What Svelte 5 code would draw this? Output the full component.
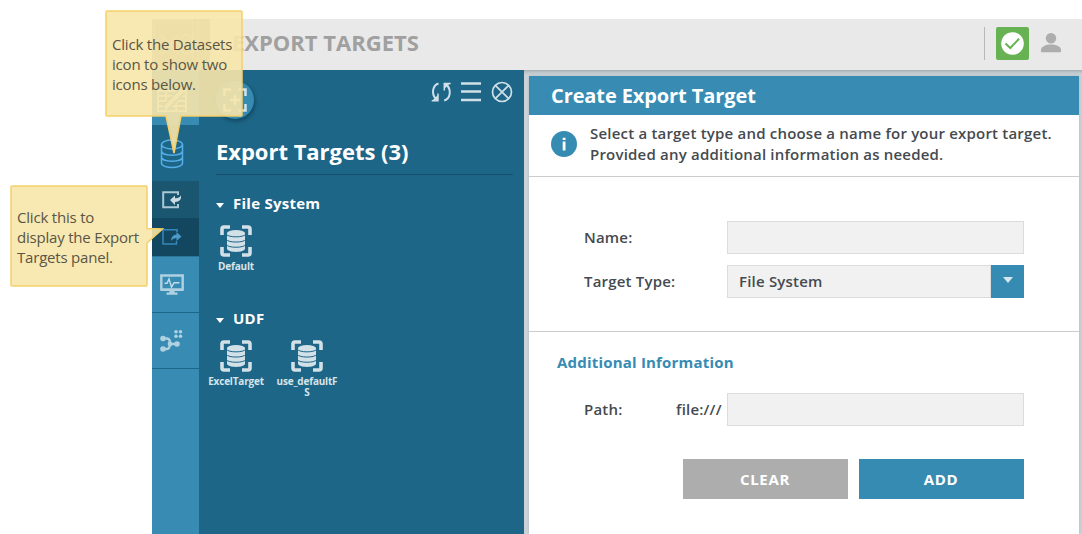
<script>
  const groups = [
    { name: 'File System', items: ['Default'] },
    { name: 'UDF', items: ['ExcelTarget', 'use_defaultFS'] }
  ];
</script>

{#snippet target()}
  <svg class="target" width="32" height="32" viewBox="0 0 32 32">
    <path d="M2 10V4Q2 2 4 2H10M22 2H28Q30 2 30 4V10M30 22V28Q30 30 28 30H22M10 30H4Q2 30 2 28V22" fill="none" stroke="#d2e0e7" stroke-width="3.600" />
    <path d="M7 8V23.500C7 28 25 28 25 23.500V8Z" fill="#d2e0e7" />
    <ellipse cx="16" cy="8" rx="9" ry="3" fill="#d2e0e7" />
    <path d="M6.500 9.300C8 12.700 24 12.700 25.500 9.300M6.500 14.500C8 17.900 24 17.900 25.500 14.500M6.500 19.700C8 23.100 24 23.100 25.500 19.700" fill="none" stroke="#1e6687" stroke-width="1" />
  </svg>
{/snippet}

<div class="page">
  <div class="app">
    <header>
      <div class="logo">
        <svg width="58" height="51" viewBox="0 0 58 51" fill="none" stroke="#fff">
          <path d="M2 1H41V50H2ZM46 1V50" opacity=".35" />
          <path d="M9 16L27 36M27 16L9 36M41 20C36 12 27 17 28 26C29 36 37 37 42 31" stroke-width="2" opacity=".3" />
        </svg>
      </div>
      <h1>EXPORT TARGETS</h1>
      <div class="status">
        <svg width="33" height="33" viewBox="0 0 33 33">
          <rect width="33" height="33" rx="2" fill="#67b354" />
          <circle cx="16.500" cy="16.500" r="11.300" fill="#fff" />
          <path d="M9.500 16.500L14.300 21L23 11.800" fill="none" stroke="#67b354" stroke-width="2" />
        </svg>
      </div>
      <svg class="user" width="20" height="20" viewBox="0 0 20 20" fill="#adadad">
        <circle cx="10" cy="5.300" r="5.200" />
        <path d="M0 19.300V17C0 13.500 5 11.600 10 11.600S20 13.500 20 17V19.300Z" />
      </svg>
    </header>

    <div class="body">
      <nav>
        <div class="cell first">
          <svg width="30" height="22" viewBox="0 0 30 22" fill="none" stroke="#c6dce6" stroke-width="2">
            <path d="M1 1H29V21H1ZM1 6H29M1 11H29M1 16H29M9 1V21M19 1V21" />
            <path d="M8 18L25 1" stroke="#388cb4" stroke-width="8" />
            <path d="M8 18L25 1" stroke-width="4" />
          </svg>
        </div>
        <div class="cell data">
          <svg width="24" height="30" viewBox="0 0 24 30" fill="none" stroke="#54aee8" stroke-width="1.500">
            <ellipse cx="12" cy="5.500" rx="10.500" ry="4.500" />
            <path d="M1.500 5.500V24C1.500 30 22.500 30 22.500 24V5.500M1.500 12C1.500 17.500 22.500 17.500 22.500 12M1.500 18C1.500 23.500 22.500 23.500 22.500 18" />
          </svg>
        </div>
        <div class="cell import">
          <svg width="20" height="18" viewBox="0 0 20 18">
            <path d="M16 4V1.200H1.200V16.300H16V13" fill="none" stroke="#a9c7d4" stroke-width="2" />
            <path d="M8 9L13 4.500V7.200Q17.500 7.500 19 4.200Q20 10.800 13 11V14Z" fill="#c9dae2" />
          </svg>
        </div>
        <div class="cell export">
          <svg width="20" height="18" viewBox="0 0 20 18">
            <path d="M15 4V1.800H1V16H14.500V13" fill="none" stroke="#3588bd" stroke-width="1.500" />
            <path d="M19.500 8.500L14.500 4V6.500Q9.500 6.800 9 12.700Q11 10 14.500 10V13Z" fill="#4b99c9" />
          </svg>
        </div>
        <div class="cell plain monitor">
          <svg width="24" height="22" viewBox="0 0 24 22">
            <path d="M1.300 1.500H22.700V15.500H1.300ZM1 15.800H23" fill="none" stroke="#afd1e1" stroke-width="2.400" />
            <path d="M4.500 9.200H7L9 5L11.500 13L14 8.800H19.500" fill="none" stroke="#c1dce8" stroke-width="1.400" />
            <path d="M9.500 16H14.500V18.500H17.500V20.800H6.500V18.500H9.500Z" fill="#afd1e1" />
          </svg>
        </div>
        <div class="cell plain flow">
          <svg width="24" height="22" viewBox="0 0 24 22" fill="#afd1e1">
            <path d="M3 8.500H7Q10 8.500 10 13.500Q10 18.800 7 19H3M10 14H17" fill="none" stroke="#afd1e1" stroke-width="2.400" />
            <circle cx="3" cy="8.500" r="2.800" /><circle cx="3" cy="19" r="2.800" />
            <circle cx="10" cy="14" r="2.400" /><circle cx="17" cy="14" r="2.800" />
            <circle cx="16" cy="1.800" r="1.800" /><circle cx="20.500" cy="1.800" r="1.800" />
            <circle cx="16" cy="6.300" r="1.800" /><circle cx="20.500" cy="6.300" r="1.800" />
          </svg>
        </div>
      </nav>

      <section class="panel">
        <div class="tools">
          <div class="add">
            <svg width="24" height="24" viewBox="0 0 24 24" fill="none" stroke="#d5e4eb" stroke-width="2.500">
              <path d="M1.500 8V1.500H8M16 1.500H22.500V8M22.500 16V22.500H16M8 22.500H1.500V16M12 7V17M7 12H17" />
            </svg>
          </div>
          <svg width="84" height="22" viewBox="0 0 84 22" fill="none" stroke="#cfe0e8" stroke-width="2">
            <path d="M9.500 2.500C3.500 4.500 2.300 12.500 6.500 17.500" />
            <path d="M9 12.500V19.800H2.700" stroke-width="1.500" />
            <path d="M9 14V19.600H3.300Z" fill="#cfe0e8" stroke="none" />
            <path d="M15.200 19.500C21.400 17.500 22.600 9.500 17.900 4" />
            <path d="M15.300 8V2.400H21Z" fill="#cfe0e8" stroke="none" />
            <path d="M15.300 9.500V2.400H21.700" stroke-width="1.500" />
            <path d="M32 2.500H52M32 10.500H52M32 19H52" stroke-width="2.300" />
            <circle cx="73" cy="11" r="9.500" stroke-width="1.700" />
            <path d="M66.300 4.300L79.700 17.700M79.700 4.300L66.300 17.700" stroke-width="1.700" />
          </svg>
        </div>
        <h2>Export Targets (3)</h2>
        {#each groups as g}
          <div class="group">
            <h3><i></i>{g.name}</h3>
            <div class="items">
              {#each g.items as item}
                <div class="item">{@render target()}<span>{item}</span></div>
              {/each}
            </div>
          </div>
        {/each}
      </section>

      <main>
        <div class="card">
          <div class="title">Create Export Target</div>
          <div class="info">
            <svg width="26" height="26" viewBox="0 0 26 26">
              <circle cx="13" cy="13" r="13" fill="#368bb3" />
              <path d="M11.700 10.500H14.500V19.500H11.700ZM11.700 6.700H14.500V9H11.700Z" fill="#fff" />
            </svg>
            <p>Select a target type and choose a name for your export target.<br />Provided any additional information as needed.</p>
          </div>
          <div class="form basics">
            <div class="row"><label for="name">Name:</label><input id="name" /></div>
            <div class="row">
              <label for="type">Target Type:</label>
              <button id="type" class="select"><span>File System</span><b><i></i></b></button>
            </div>
          </div>
          <div class="form extra">
            <h4>Additional Information</h4>
            <div class="row"><label for="path">Path:</label><em>file:///</em><input id="path" /></div>
            <div class="actions"><button class="clear">CLEAR</button><button>ADD</button></div>
          </div>
        </div>
      </main>
    </div>
  </div>

  <div class="callout one">
    <svg width="138" height="146" viewBox="0 0 138 146">
      <path d="M2 1H136Q137 1 137 2V105Q137 106 136 106H76L69 143L61 106H2Q1 106 1 105V2Q1 1 2 1Z" />
    </svg>
    <p>Click the Datasets<br />icon to show two<br />icons below.</p>
  </div>
  <div class="callout two">
    <svg width="156" height="102" viewBox="0 0 156 102">
      <path d="M2 1H136Q137 1 137 2V43.500L152.500 44L137 58V100Q137 101 136 101H2Q1 101 1 100V2Q1 1 2 1Z" />
    </svg>
    <p>Click this to<br />display the Export<br />Targets panel.</p>
  </div>
</div>

<style>
  * { box-sizing: border-box; margin: 0; }
  svg { display: block; flex: none; }
  .page { position: relative; width: 1082px; height: 534px; overflow: hidden; padding: 19px 0 0 152px; background: #fff; font-family: 'Open Sans', sans-serif; color: #454a4f; }
  .app { height: 515px; display: flex; flex-direction: column; }
  header { height: 51px; flex: none; display: flex; align-items: center; background: #e9e9e9; position: relative; }
  .logo { width: 58px; height: 51px; background: #96a6a5; }
  h1 { margin-left: 22px; margin-top: -5px; flex: 1; font-size: 22px; line-height: 30px; color: #a0a0a0; white-space: nowrap; }
  .status { padding-left: 11px; border-left: 1px solid #b8b8b8; margin-top: -3px; }
  .user { margin: -4px 21px 0 12px; }
  .body { flex: 1; display: flex; min-height: 0; position: relative; }
  nav { width: 47px; background: #388cb4; }
  .cell { display: flex; justify-content: center; align-items: center; padding-right: 8px; }
  .first { height: 55px; padding-top: 6px; }
  .data { height: 56px; background: #1e6687; padding-top: 2px; }
  .import { height: 37px; background: #1b5670; }
  .export { height: 38px; background: #12475f; }
  .plain { height: 56px; border-bottom: 1px solid #1e6687; }
  .monitor { height: 57px; border-top: 1px solid #2a7598; }
  .panel { width: 325px; background: #1e6687; color: #fff; }
  .tools { height: 68px; display: flex; justify-content: space-between; align-items: flex-start; padding: 11px 11px 0 17px; }
  .add { width: 38px; height: 38px; border-radius: 50%; background: #368bb3; display: flex; align-items: center; justify-content: center; box-shadow: 1px 2px 4px #10455c; }
  h2 { height: 37px; margin: 0 11px 0 17px; border-bottom: 1px solid #174f6a; font-size: 22px; line-height: 27px; letter-spacing: -.03px; white-space: nowrap; }
  .group { height: 115px; padding: 17px 0 0 9px; }
  h3 { display: flex; align-items: center; font-size: 15px; line-height: 22px; letter-spacing: .25px; margin-left: 9px; }
  h3 i { border: 4.500px solid transparent; border-top: 5px solid #fff; border-bottom: 0; margin: 4px 9px 0 -1px; }
  .items { display: flex; gap: 15px; padding-top: 11px; }
  .item { width: 56px; display: flex; flex-direction: column; align-items: center; }
  .item span { width: 64px; padding-top: 4px; font-size: 10px; line-height: 11px; font-weight: 700; letter-spacing: -.2px; color: #d6e4eb; text-align: center; word-break: break-all; }
  main { flex: 1; padding: 6px 3px 0 5px; background: #cdd4d8; box-shadow: inset 0 4px 4px -3px #959ea2; }
  .card { height: 458px; background: #fff; box-shadow: 0 0 3px #aeb8bd; }
  .title { height: 39px; padding-left: 22px; background: #388cb3; color: #fff; font-size: 20px; line-height: 39px; letter-spacing: -.1px; font-weight: 700; }
  .info { height: 62px; display: flex; align-items: center; gap: 13px; padding: 0 0 3px 22px; border-bottom: 1px solid #ccc; }
  .info p { font-size: 15px; line-height: 21px; font-weight: 600; letter-spacing: .2px; white-space: nowrap; margin-top: -1px; }
  .form { padding: 0 55px; font-size: 15px; font-weight: 600; letter-spacing: .2px; }
  .basics { height: 155px; padding-top: 44px; border-bottom: 1px solid #ccc; }
  .row { height: 33px; margin-bottom: 11px; display: flex; align-items: center; }
  label { width: 143px; padding-bottom: 2px; }
  input { width: 297px; height: 33px; border: 1px solid #dcdcdc; background: #f1f1f1; }
  .select { width: 297px; height: 33px; padding: 0; border: 0; display: flex; background: #f1f1f1; color: inherit; }
  .select span { flex: 1; border: 1px solid #dcdcdc; font: 600 15px/31px 'Open Sans', sans-serif; letter-spacing: .2px; padding-left: 11px; text-align: left; }
  .select b { width: 33px; height: 33px; background: #368bb3; display: flex; align-items: center; justify-content: center; }
  .select b i { border: 5px solid transparent; border-top: 6px solid #d7e8f0; border-bottom: 0; margin-top: -3px; }
  h4 { margin: 0 0 20px -27px; padding-top: 19px; color: #368bb3; font-size: 15px; line-height: 22px; letter-spacing: .2px; }
  .extra label { width: 92px; }
  em { width: 51px; font-style: normal; padding-bottom: 2px; }
  .actions { display: flex; gap: 11px; margin: 33px 0 0 99px; }
  .actions button { width: 165px; height: 40px; border: 0; padding: 0 1px 1px 0; background: #368bb3; color: #fff; font: 700 15px 'Open Sans', sans-serif; letter-spacing: .65px; }
  .actions .clear { background: #adadad; }
  .callout { position: absolute; z-index: 5; }
  .callout path { fill: rgba(247, 230, 170, .9); stroke: #f5cf69; stroke-width: 1.500; }
  .callout svg { position: absolute; left: 0; top: 0; }
  .callout p { position: relative; font-size: 15px; line-height: 20px; letter-spacing: -.2px; color: #595646; white-space: nowrap; }
  .one { left: 105px; top: 10px; padding: 24px 0 0 7px; }
  .two { left: 10px; top: 185px; padding: 22px 0 0 7px; }
</style>
